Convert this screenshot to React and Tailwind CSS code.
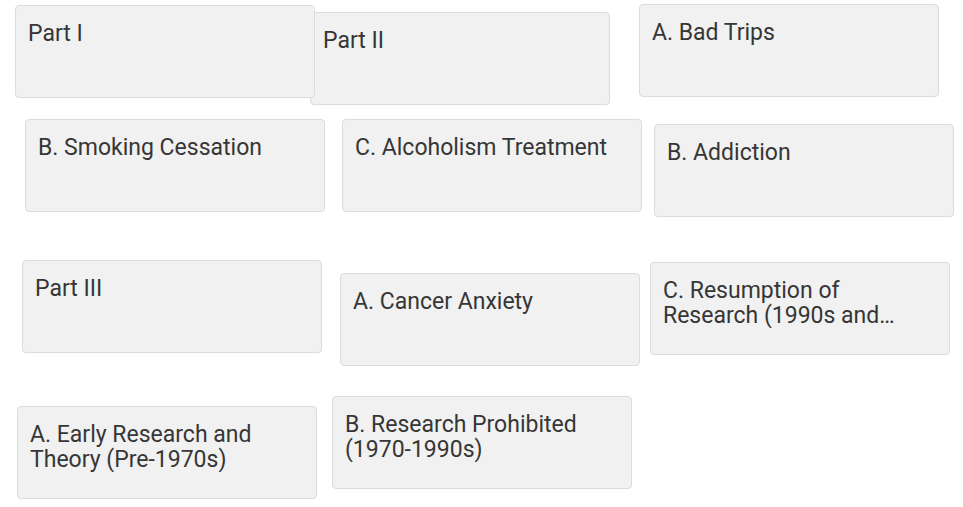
import React from "react";

const cards = [
  { t: "Part II", x: 310, y: 12 },
  { t: "Part I", x: 15, y: 5 },
  { t: "A. Bad Trips", x: 639, y: 4 },
  { t: "B. Smoking Cessation", x: 25, y: 119 },
  { t: "C. Alcoholism Treatment", x: 342, y: 119 },
  { t: "B. Addiction", x: 654, y: 124 },
  { t: "Part III", x: 22, y: 260 },
  { t: "A. Cancer Anxiety", x: 340, y: 273 },
  { t: "C. Resumption of Research (1990s and Beyond)", x: 650, y: 262 },
  { t: "A. Early Research and Theory (Pre-1970s)", x: 17, y: 406 },
  { t: "B. Research Prohibited (1970-1990s)", x: 332, y: 396 },
];

export default function App() {
  return (
    <div className="relative w-[963px] h-[507px] bg-white overflow-hidden font-['Roboto',sans-serif]">
      {cards.map((c) => (
        <div
          key={c.t}
          className="absolute w-[300px] h-[93px] rounded-[4px] border border-[#dcdcdc] bg-[#f1f1f1] pl-[12px] pt-[15px]"
          style={{ left: c.x, top: c.y }}
        >
          <div className="w-[265px] text-[23px] leading-[25px] text-[#363636] line-clamp-2">
            {c.t}
          </div>
        </div>
      ))}
    </div>
  );
}
